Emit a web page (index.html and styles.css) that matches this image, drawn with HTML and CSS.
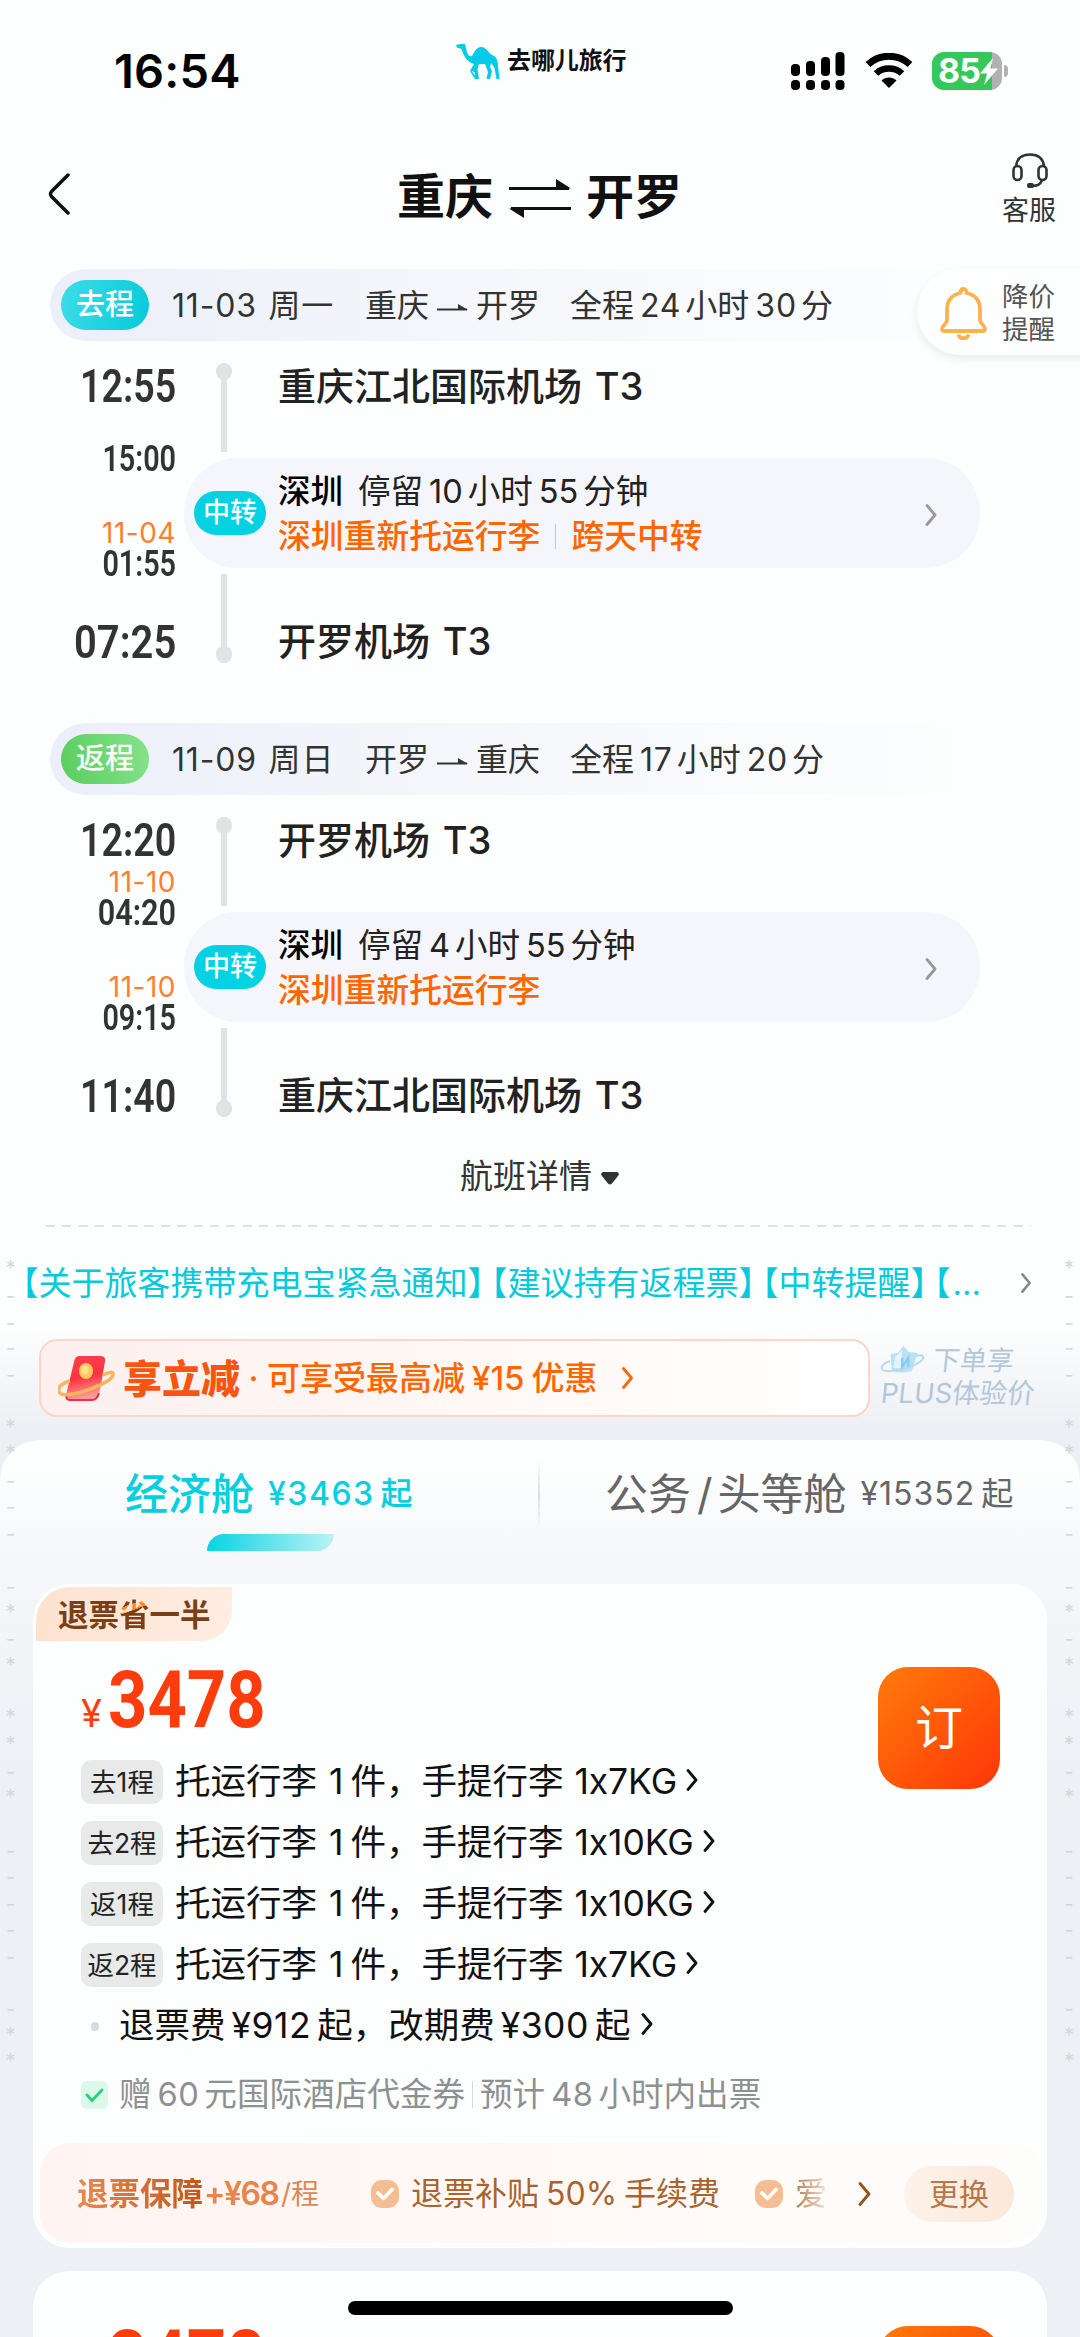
FILE: index.html
```html
<!DOCTYPE html>
<html lang="zh-CN">
<head>
<meta charset="utf-8">
<title>重庆 - 开罗</title>
<link rel="stylesheet" href="styles.css">
</head>
<body>
<svg width="0" height="0" class="defs">
  <defs>
    <symbol id="chev" viewBox="0 0 12 22"><path d="M2 1.500 10 11 2 20.500" fill="none" stroke="currentColor" stroke-width="2.800" stroke-linecap="round" stroke-linejoin="round"/></symbol>
    <symbol id="to" viewBox="0 0 32 10"><path d="M0 6.500H30" fill="none" stroke="#333" stroke-width="2"/><path d="M21 1v6h10z" fill="#333"/></symbol>
    <symbol id="tick" viewBox="0 0 28 28"><rect width="28" height="28" rx="11" fill="#f5be92"/><path d="M7 13l5.500 5.500L21 9.500" fill="none" stroke="#fff" stroke-width="3.600" stroke-linecap="round" stroke-linejoin="round"/></symbol>
  </defs>
</svg>

<header class="status">
  <div class="clock">16:54</div>
  <div class="brand">
    <svg class="camel" viewBox="0 0 44 35"><path fill="#05cbe9" d="M0 1 4 0H9L10 4C11 10 13 13 16 12C19 6 22 3 25 3C29 2 32 8 36 11C41 13 42 17 42 22L43.500 35H40.500L38.500 24L35 19L34 23L36 27L34 35H30.500L32 28L29 20H23L21.500 25L23 35H19.500L18.500 28L15.500 27L21 34L19 35L14 27L18 20C12 18 9 14 7 9L5.500 5L1 3.500Z"/></svg>
    <span>去哪儿旅行</span>
  </div>
  <div class="sys">
    <svg class="signal" viewBox="0 0 54 38"><g><rect x="0" y="12" width="9" height="12" rx="4"/><rect x="15" y="9" width="9" height="15" rx="4"/><rect x="30" y="5" width="9" height="19" rx="4"/><rect x="44.500" y="0" width="9" height="24" rx="4"/><rect x="0" y="28" width="9" height="10" rx="4"/><rect x="15" y="28" width="9" height="10" rx="4"/><rect x="30" y="28" width="9" height="10" rx="4"/><rect x="44.500" y="28" width="9" height="10" rx="4"/></g></svg>
    <svg class="wifi" viewBox="0 0 48 36"><path d="M3 11.500C15 .5 33 .5 45 11.500" fill="none" stroke="#000" stroke-width="7"/><path d="M11 20.500C18 13.800 30 13.800 37 20.500" fill="none" stroke="#000" stroke-width="6.500"/><path d="M24 35 16.500 27.500C20.500 23.500 27.500 23.500 31.500 27.500Z"/></svg>
    <div class="battery"><span>85</span><svg viewBox="0 0 18 27"><path d="M13 0 0 15.500H7L4 27 18 10.500H10.500Z" fill="#fff"/></svg></div>
    <i class="nub"></i>
  </div>
</header>

<nav class="nav">
  <svg class="back" viewBox="0 0 24 42"><path d="M21 2 4.500 18.500Q2.500 21 4.500 23.500L21 40" fill="none" stroke="#111" stroke-width="3.500" stroke-linecap="round"/></svg>
  <h1>重庆<svg viewBox="0 0 62 40"><path d="M0 9.500H62L47 0V9.500M0 29.500H62M0 29.500 15 39V29.500" fill="#111"/><path d="M0 9.500H60M2 29.500H62" stroke="#111" stroke-width="3.200"/></svg>开罗</h1>
  <div class="service">
    <svg viewBox="0 0 36 35"><g fill="none" stroke="#333" stroke-width="2.600"><path d="M4 13C5 5 10 1.500 18 1.500S31 5 32 13"/><rect x="1.500" y="13" width="8" height="14" rx="4"/><rect x="26.500" y="13" width="8" height="14" rx="4"/><path d="M30 27C28.500 31.500 26 33 20 33"/></g><rect x="15" y="30" width="7" height="5" rx="2" fill="#333"/></svg>
    <span>客服</span>
  </div>
</nav>

<div class="alert">
  <svg viewBox="0 0 47 53"><g fill="none" stroke="#ffb150" stroke-width="3.800" stroke-linejoin="round"><path d="M23.500 2C21 2 20.500 4 20.500 6C11 8 7 14 7 23V33C7 37 2 38 2 42C2 43.500 3 44 5 44H42C44 44 45 43.500 45 42C45 38 40 37 40 33V23C40 14 36 8 26.500 6C26.500 4 26 2 23.500 2Z"/><path d="M18.500 47.500C19 52.500 28 52.500 28.500 47.500"/></g></svg>
  <p>降价<br>提醒</p>
</div>

<main>
  <section class="leg">
    <div class="banner">
      <b class="pill">去程</b><span class="date">11-03 周一</span>
      <span class="route">重庆<svg><use href="#to"/></svg>开罗</span>
      <span class="dur">全程<i>24</i>小时<i>30</i>分</span>
    </div>
    <div class="plan">
      <div class="times">
        <time class="t1">12:55</time><em></em><time class="t2">15:00</time>
        <em>11-04</em><time class="t3">01:55</time><time class="t4 wide">07:25</time>
      </div>
      <div class="stops">
        <div class="stop"><div class="track"><i></i></div><h3>重庆江北国际机场 T3</h3></div>
        <div class="transit">
          <b class="badge">中转</b>
          <div class="info">
            <p><strong>深圳</strong>停留<i>10</i>小时<i>55</i>分钟</p>
            <p class="warn">深圳重新托运行李<u></u>跨天中转</p>
          </div>
          <svg class="go"><use href="#chev"/></svg>
        </div>
        <div class="stop end"><div class="track"><i></i></div><h3>开罗机场 T3</h3></div>
      </div>
    </div>
  </section>

  <section class="leg">
    <div class="banner">
      <b class="pill green">返程</b><span class="date">11-09 周日</span>
      <span class="route">开罗<svg><use href="#to"/></svg>重庆</span>
      <span class="dur">全程<i>17</i>小时<i>20</i>分</span>
    </div>
    <div class="plan">
      <div class="times">
        <time class="t1">12:20</time><em>11-10</em><time class="t2 wide">04:20</time>
        <em>11-10</em><time class="t3">09:15</time><time class="t4">11:40</time>
      </div>
      <div class="stops">
        <div class="stop"><div class="track"><i></i></div><h3>开罗机场 T3</h3></div>
        <div class="transit">
          <b class="badge">中转</b>
          <div class="info">
            <p><strong>深圳</strong>停留<i>4</i>小时<i>55</i>分钟</p>
            <p class="warn">深圳重新托运行李</p>
          </div>
          <svg class="go"><use href="#chev"/></svg>
        </div>
        <div class="stop end"><div class="track"><i></i></div><h3>重庆江北国际机场 T3</h3></div>
      </div>
    </div>
  </section>

  <div class="detail">航班详情<svg viewBox="0 0 18 13"><path d="M2 0H16Q19 1 17 4L11 11.500Q9 13.500 7 11.500L1 4Q-1 1 2 0Z" fill="#333"/></svg></div>
  <div class="dash"></div>

  <div class="notice">
    <p><i>【</i>关于旅客携带充电宝紧急通知<i>】</i><i class="open">【</i>建议持有返程票<i>】</i><i class="open">【</i>中转提醒<i>】</i><i class="open">【</i>…</p>
    <svg><use href="#chev"/></svg>
  </div>

  <div class="promo">
    <div class="coupon">
      <svg class="packet" viewBox="0 0 57 46"><defs><linearGradient id="red" x2=".2" y2="1"><stop stop-color="#fb3f4c"/><stop offset=".55" stop-color="#fa3341"/><stop offset="1" stop-color="#ff9c96"/></linearGradient></defs><path d="M21 1H42Q48 1 47 6L43 30Q40 45 35 45H12Q6 45 8 40L16 7Q17 1 21 1Z" fill="url(#red)"/><path d="M9 39Q7 45 12 45H34Q39 45 41 38" fill="none" stroke="#f72a4a" stroke-width="2"/><path d="M12 26C-2 30-2 38 5 39.500C18 41 53 28 55 20C56 16 51 17 45 20" fill="none" stroke="#f9b45e" stroke-width="3.500"/><ellipse cx="28" cy="16" rx="7" ry="8" fill="#ffc95c"/><ellipse cx="27" cy="15" rx="3.500" ry="4.500" fill="#ffe392"/></svg>
      <strong>享立减</strong><span class="sep">·</span><span class="save">可享受最高减<i>¥15</i>优惠</span>
      <svg class="go"><use href="#chev"/></svg>
    </div>
    <div class="plus">
      <p><svg viewBox="0 0 44 28"><path d="M9 8 16 7 21 0 27 6 36 7 32 25Q22 28 12 25Z" fill="#b9e1f8"/><path d="M14 11 20 4 21 22 13 22Z" fill="#e3f4fd"/><path d="M21 12l1 9 5-9 1 9" fill="none" stroke="#8ccbef" stroke-width="2.500"/><path d="M9 15C-3 20 0 26 12 25C28 24 44 15 42 11C41 9 38 9 35 10" fill="none" stroke="#b5daf0" stroke-width="2"/></svg>下单享</p>
      <p class="l2">PLUS体验价</p>
    </div>
  </div>
</main>

<section class="fares">
  <div class="tabs">
    <div class="tab on"><b>经济舱</b><span>¥3463<i>起</i></span></div>
    <div class="tab off"><b>公务<s>/</s>头等舱</b><span>¥15352<i>起</i></span></div>
  </div>

  <article class="card">
    <div class="ribbon">退票<span>省</span>一半</div>
    <div class="fare">
      <div class="price"><small>¥</small><b>3478</b></div>
      <button class="book">订</button>
    </div>
    <ul>
      <li><b>去1程</b>托运行李<i>1</i>件，手提行李<i class="kg">1x7KG</i><svg><use href="#chev"/></svg></li>
      <li><b>去2程</b>托运行李<i>1</i>件，手提行李<i class="kg">1x10KG</i><svg><use href="#chev"/></svg></li>
      <li><b>返1程</b>托运行李<i>1</i>件，手提行李<i class="kg">1x10KG</i><svg><use href="#chev"/></svg></li>
      <li><b>返2程</b>托运行李<i>1</i>件，手提行李<i class="kg">1x7KG</i><svg><use href="#chev"/></svg></li>
      <li class="fee"><em></em>退票费<i>¥912</i>起，改期费<i>¥300</i>起<svg><use href="#chev"/></svg></li>
    </ul>
    <div class="gift"><svg viewBox="0 0 27 28"><rect width="27" height="28" rx="6" fill="#dcf8ea"/><path d="M6 14l5 5.500L21 9" fill="none" stroke="#2cd083" stroke-width="3" stroke-linecap="round"/></svg>赠<i>60</i>元国际酒店代金券<u></u>预计<i>48</i>小时内出票</div>
    <div class="cover">
      <strong>退票保障</strong><span class="add">+¥68</span><span class="per">/程</span>
      <svg class="ok k1"><use href="#tick"/></svg><span class="perk">退票补贴<i>50%</i>手续费</span>
      <svg class="ok k2"><use href="#tick"/></svg><span class="fade">爱</span>
      <svg class="go"><use href="#chev"/></svg>
      <button class="swap">更换</button>
    </div>
  </article>

  <article class="card next">
    <div class="fare">
      <div class="price"><small>¥</small><b>3478</b></div>
      <button class="book">订</button>
    </div>
  </article>
</section>

<svg class="marks" width="1080" height="2337" viewBox="0 0 1080 2337"></svg>
<div class="home"></div>
<script src="marks.js"></script>
</body>
</html>
```
FILE: marks.js
```js
// Watermark glyphs running down both page edges: [y, glyph]
var marks = [[1264,'*'],[1296,'-'],[1323,'-'],[1348,'-'],[1375,'-'],[1423,'*'],[1449,'*'],[1481,'-'],[1507,'-'],[1534,'-'],[1587,'-'],[1608,'*'],[1639,'-'],[1661,'*'],[1713,'*'],[1740,'*'],[1772,'-'],[1793,'*'],[1851,'-'],[1877,'-'],[1904,'-'],[1930,'-'],[1957,'-'],[2009,'-'],[2031,'*'],[2057,'*']];
var svg = document.querySelector('.marks');
marks.forEach(function (m) {
  [10.5, 1069].forEach(function (x) {
    var t = document.createElementNS('http://www.w3.org/2000/svg', 'text');
    t.setAttribute('x', x);
    t.setAttribute('y', m[0] + (m[1] === '*' ? 11 : 7));
    t.textContent = m[1];
    svg.appendChild(t);
  });
});
```
FILE: styles.css
```css
* { box-sizing: border-box; margin: 0; padding: 0; }
body {
  position: relative; width: 1080px; height: 2337px; overflow: hidden;
  font-family: Inter, "Noto Sans CJK SC", sans-serif; line-height: 1; color: #333;
  font-variant-ligatures: no-contextual;
  background: linear-gradient(#fdfefe 0, #fdfefe 1325px, #edeff4 1430px, #eff0f5 2337px);
  white-space: nowrap;
}
i, em, s, u { font-style: normal; text-decoration: none; }
svg { display: block; flex: none; }
button { border: 0; font: inherit; }
.defs { position: absolute; }

.status { display: flex; height: 110px; position: relative; }
.clock { margin: 47px 0 0 114px; width: 342px; font-size: 47px; line-height: 48px; font-weight: 600; color: #000; letter-spacing: .2px; font-variant-ligatures: normal; }
.brand { display: flex; margin-top: 44px; width: 335px; }
.camel { width: 44px; height: 35px; }
.brand span { margin: 5px 0 0 7px; font-size: 24px; font-weight: 700; color: #111; letter-spacing: -.1px; }
.sys { display: flex; margin-top: 52px; height: 38px; }
.signal { width: 54px; height: 38px; }
.wifi { width: 48px; height: 36px; margin: 1px 0 0 20px; }
.battery { display: flex; align-items: center; margin-left: 19px; width: 70px; height: 38px; border-radius: 12px; background: linear-gradient(90deg, #34c759 60px, #b1b1b3 60px); }
.battery span { margin-left: 6px; width: 40px; font-size: 34px; font-weight: 700; color: #fff; letter-spacing: -1px; }
.battery svg { width: 18px; height: 27px; margin-left: 2px; }
.nub { width: 4px; height: 12px; margin: 13px 0 0 2px; border-radius: 0 4px 4px 0; background: #b1b1b3; }

.nav { display: flex; height: 159px; }
.back { width: 24px; height: 42px; margin: 63px 0 0 47px; }
.nav h1 { display: flex; align-items: center; width: 605px; height: 50px; margin: 62px 0 0 326px; font-size: 48px; font-weight: 700; color: #111; }
.nav h1 svg { width: 62px; height: 40px; margin: 4px 15px 0 16px; }
.service { margin-top: 43px; font-size: 27px; }
.service svg { width: 36px; height: 35px; margin: 0 0 9px 10px; }

.alert {
  position: absolute; z-index: 2; left: 917px; top: 268px; width: 180px; height: 87px; padding-left: 23px;
  display: flex; align-items: center; border-radius: 44px 0 0 44px; background: #fdfefe;
  box-shadow: 0 4px 9px rgba(60, 60, 60, .09);
}
.alert svg { width: 47px; height: 53px; margin-top: 4px; }
.alert p { margin: 3px 0 0 15px; font-size: 26.5px; line-height: 33px; color: #555; }

.leg + .leg { margin-top: 55px; }
.banner {
  display: flex; align-items: center; height: 72px; margin: 0 100px 0 50px; padding: 0 0 0 11px;
  border-radius: 36px; font-size: 32px;
  background: linear-gradient(90deg, #eceffa, #f5f6fb 40%, #fdfefe);
}
.banner span { padding-top: 2px; }
.pill { width: 88px; height: 50px; line-height: 50px; border-radius: 25px; text-align: center; font-size: 29px; font-weight: 500; color: #fff; background: linear-gradient(105deg, #3ddde6, #07c9da); }
.pill.green { background: linear-gradient(75deg, #59cd5e, #86e38a); }
.date { margin-left: 23px; width: 193px; letter-spacing: .8px; word-spacing: 2px; font-variant-ligatures: normal; }
.route { display: flex; align-items: center; width: 205px; }
.route svg { width: 32px; height: 10px; margin: 4px 7px 0 8px; }
.dur i { margin: 0 4px 0 6px; letter-spacing: .8px; }

.plan { display: flex; height: 327px; }
.times { display: grid; grid-template-rows: 48px 33px 32px 73px 32px 86px; width: 176px; padding-top: 21px; justify-items: end; align-items: end; }
time { display: block; font-family: Roboto, sans-serif; font-weight: 600; transform: scaleX(.8); transform-origin: right; font-size: 36px; line-height: 32px; }
.wide { transform: scaleX(.85); }
.t1, .t4 { font-size: 47px; line-height: 48px; }
em { color: #ff7e30; }
.times em { font-size: 28px; line-height: 30px; letter-spacing: .5px; }
.stops { flex: 1; padding-left: 8px; }
.stop { display: flex; height: 117px; padding-left: 32px; }
.track { width: 16px; margin: 22px 0 6px; background: linear-gradient(#e1e4e4, #e1e4e4) center / 6px 100% no-repeat; }
.track i { display: block; width: 16px; height: 17px; border-radius: 8px; background: #e1e4e4; }
.stop h3 { margin: 21px 0 0 46px; font-size: 38px; line-height: 48px; font-weight: 500; color: #222; word-spacing: 2.5px; }
.stop.end { height: 100px; }
.end .track { display: flex; align-items: flex-end; margin: 6px 0 5px; }
.end h3 { margin-top: 49px; }
.transit { display: flex; align-items: center; width: 796px; height: 110px; padding-left: 10px; border-radius: 54px; background: #f5f5fc; }
.badge { width: 72px; height: 44px; line-height: 44px; border-radius: 22px; text-align: center; font-size: 27px; font-weight: 500; color: #fff; background: #04d2e3; }
.info { flex: none; width: 659px; padding: 2px 0 0 12px; font-size: 32.5px; line-height: 44px; color: #222; }
.info strong { margin-right: 15px; font-weight: 500; color: #000; }
.info i { margin: 0 5px 0 6px; }
.info .warn { display: flex; align-items: center; font-weight: 500; color: #ff6600; font-size: 32.8px; }
.warn u { width: 1px; height: 25px; margin: 0 15px; background: #c8c8cc; }
.transit .go { width: 12px; height: 22px; margin-top: 3px; color: #999; }

.detail { display: flex; align-items: center; justify-content: center; height: 103px; padding: 5px 1px 0 0; font-size: 33px; }
.detail svg { width: 18px; height: 13px; margin: 4px 0 0 9px; }
.dash { height: 2px; margin: 0 49px 0 46px; background: repeating-linear-gradient(90deg, #dfe2e2 0 9px, transparent 9px 16.4px); }
.notice { display: flex; align-items: center; height: 112px; padding: 0 0 0 22px; }
.notice p { width: 998px; font-size: 33px; color: #06c9db; }
.notice i { font-feature-settings: "halt"; }
.notice .open { margin-left: 7px; }
.notice .open:last-of-type { margin-right: 2px; }
.notice svg { width: 12px; height: 20px; color: #888; }

.promo { display: flex; height: 78px; margin-left: 39px; }
.coupon { display: flex; align-items: center; width: 831px; padding-left: 17px; border: 2px solid #fcd6c8; border-radius: 18px; background: linear-gradient(90deg, #fdf0ef, #fff8f5 50%, #fff); font-size: 33px; font-weight: 500; color: #ff6600; }
.packet { width: 57px; height: 46px; }
.coupon strong { margin-left: 8px; font-size: 39px; font-weight: 900; color: #fa5412; }
.sep { width: 27px; text-align: center; }
.save i { margin: 0 7px; }
.coupon .go { width: 13px; height: 22px; margin-left: 24px; }
.plus { padding: 5px 0 0 11px; font-size: 27px; color: #b3c7da; }
.plus p { display: flex; align-items: center; height: 32px; transform: skewX(-6deg); }
.plus svg { width: 44px; height: 28px; margin-right: 8px; }
.plus .l2 { height: 36px; font-size: 27.5px; }

.fares { margin-top: 23px; height: 897px; overflow: hidden; border-radius: 40px 40px 0 0; background: linear-gradient(#fdfefe 30px, #f6f7fa 120px, #eff0f5 330px, #eff0f5); }
.tabs { display: flex; height: 144px; }
.tab { width: 50%; display: flex; position: relative; padding-top: 29px; line-height: 50px; }
.tab b { font-size: 43px; font-weight: 500; }
.tab span { font-size: 32px; margin: 0 0 0 14px; letter-spacing: 1.5px; }
.tab i { margin-left: 6px; font-size: 32px; }
.on { padding-left: 125px; color: #06cfe0; font-weight: 500; }
.on::after { content: ""; position: absolute; left: 207px; top: 94px; width: 127px; height: 17px; border-radius: 17px 0 17px 0; background: linear-gradient(90deg, #0ad3e2, #baf3f6); }
.off { padding-left: 65px; color: #666; }
.off::before { content: ""; position: absolute; left: -2px; top: 19px; width: 2px; height: 72px; background: linear-gradient(transparent, #ddd, transparent); }
.off b { font-weight: 400; }
.off span { letter-spacing: 1px; }
.off s { margin: 0 5px 0 6px; }

.card { height: 664px; margin: 0 33px; border-radius: 36px; background: #fdfefe; padding: 3px; }
.ribbon { width: 196px; height: 54px; padding-left: 22px; line-height: 56px; border-radius: 34px 0 30px 0; font-size: 30.5px; font-weight: 700; color: #7a3f15; background: linear-gradient(90deg, #fee2d0, #ffede3); }
.ribbon span { background: linear-gradient(160deg, #7a3f15 26%, #ff8a1f 26%, #ff8a1f 40%, #7a3f15 40%); -webkit-background-clip: text; background-clip: text; color: transparent; }
.fare { display: flex; justify-content: space-between; height: 119px; padding: 26px 44px 0 45px; }
.price { display: flex; height: 70px; color: #ff3d0c; }
.price small { font-size: 38px; margin-top: 27px; width: 25px; }
.price b { margin: -2px 0 0 2px; font-family: Roboto, sans-serif; font-size: 79px; line-height: 70px; font-weight: 700; transform: scaleX(.87); transform-origin: left; }
.book { width: 122px; height: 122px; border-radius: 30px; font-size: 48px; color: #fff; background: linear-gradient(135deg, #ff7b0a, #ff3608); }
.card ul { margin-top: -9px; }
.card li { display: flex; align-items: center; height: 61px; padding-left: 45px; font-size: 35.5px; color: #111; }
.card li b { width: 82px; height: 44px; margin-right: 12px; line-height: 44px; border-radius: 10px; text-align: center; font-size: 26.5px; font-weight: 400; color: #222; background: #e8eaea; }
.card li i { margin: 0 7px 0 12px; }
.card li .kg { margin: 0 9px 0 11px; letter-spacing: -.1px; }
.card li svg { width: 12px; height: 22px; margin-bottom: 4px; }
.card .fee i { margin: 0 6px; letter-spacing: .5px; }
.card .fee svg { margin-left: 11px; }
.fee em { width: 8px; height: 9px; margin: 2px 20px 0 10px; border-radius: 4px; background: #d9dcdc; }
.gift { display: flex; align-items: center; height: 76px; padding: 1px 0 0 45px; font-size: 32.6px; color: #8d9191; }
.gift svg { width: 27px; height: 28px; margin-right: 11px; }
.gift i { margin: 0 5px 0 6px; letter-spacing: .5px; }
.gift u { width: 1px; height: 27px; margin: 0 7px; background: #d8dada; }
.cover { display: flex; align-items: center; height: 100px; margin: 11px 2px 0 4px; padding: 1px 0 0 37px; border-radius: 30px; background: linear-gradient(90deg, #fff4f1, #fffaf7 60%, #fdfdfc); font-size: 32px; color: #a9632e; }
.cover strong { font-size: 31.5px; font-weight: 700; background: linear-gradient(90deg, #e88950, #c2571b); -webkit-background-clip: text; background-clip: text; color: transparent; }
.add { width: 77px; margin-left: 1px; font-size: 32px; font-weight: 600; letter-spacing: -1.500px; color: #e8854a; }
.per { width: 40px; font-size: 28px; color: #de8855; }
.ok { width: 28px; height: 28px; }
.k1 { margin-left: 50px; }
.perk { margin-left: 12px; width: 344px; }
.perk i { margin: 0 7px; }
.fade { margin-left: 12px; width: 34px; background: linear-gradient(90deg, #b87a4b, #f7e8dc); -webkit-background-clip: text; background-clip: text; color: transparent; }
.cover .go { width: 15px; height: 24px; margin-left: 28px; color: #93541f; }
.swap { width: 110px; height: 56px; margin-left: 32px; border-radius: 28px; font-size: 30px; color: #b87745; background: linear-gradient(90deg, #fdf2e9, #fbe8da); }
.next { margin-top: 23px; }
.next .fare { padding-top: 52px; }

.marks { position: absolute; left: 0; top: 0; font-size: 20px; fill: #d5d7d9; text-anchor: middle; pointer-events: none; }
.home { position: absolute; left: 348px; top: 2301px; width: 385px; height: 14px; border-radius: 7px; background: #000; }
```
